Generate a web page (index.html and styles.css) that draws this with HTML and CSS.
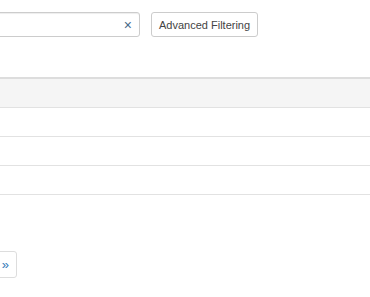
FILE: index.html
```html
<!DOCTYPE html>
<html lang="en">
<head>
    <meta charset="UTF-8">
    <meta name="viewport" content="width=device-width, initial-scale=1.0">
    <title>Grid</title>
    <link rel="stylesheet" href="styles.css">
</head>
<body>
    <div class="page">
        <div class="toolbar">
            <div class="search">
                <input type="text" class="search-input">
                <span class="clear">&times;</span>
            </div>
            <button class="btn">Advanced Filtering</button>
        </div>

        <table class="grid">
            <thead>
                <tr><th></th></tr>
            </thead>
            <tbody>
                <tr><td></td></tr>
                <tr><td></td></tr>
                <tr><td></td></tr>
            </tbody>
        </table>

        <div class="pager">
            <a class="page-link">&raquo;</a>
        </div>
    </div>
</body>
</html>
```

FILE: styles.css
```css
body {
    margin: 0;
    font-family: "Liberation Sans", Arial, sans-serif;
    font-size: 12px;
    color: #333;
    background: #fff;
    overflow: hidden;
}

.page {
    margin-left: -200px;
    width: 570px;
    overflow: hidden;
}

.toolbar {
    display: flex;
    align-items: center;
    padding-top: 12px;
    height: 25px;
}

.search {
    display: flex;
    align-items: center;
    width: 340px;
    height: 25px;
    box-sizing: border-box;
    border: 1px solid #ccc;
    border-radius: 3px;
    box-shadow: inset 0 1px 1px rgba(0, 0, 0, 0.075);
}

.search-input {
    flex: 1;
    min-width: 0;
    border: none;
    outline: none;
    background: transparent;
}

.clear {
    color: #4a6a8a;
    font-size: 14px;
    margin-right: 7px;
    line-height: 1;
}

.btn {
    margin-left: 11px;
    height: 25px;
    padding: 0 7px;
    font-family: inherit;
    font-size: 11px;
    color: #444;
    background: #fff;
    border: 1px solid #ccc;
    border-radius: 3px;
}

.grid {
    margin-top: 40px;
    width: 100%;
    border-collapse: collapse;
}

.grid th {
    height: 28px;
    background: #f5f5f5;
    border-top: 2px solid #ddd;
    border-bottom: 1px solid #e2e2e2;
    padding: 0;
}

.grid td {
    height: 28px;
    border-bottom: 1px solid #e2e2e2;
    padding: 0;
}

.pager {
    margin-top: 56px;
    margin-left: 150px;
    display: flex;
}

.page-link {
    display: block;
    width: 67px;
    height: 27px;
    box-sizing: border-box;
    border: 1px solid #ddd;
    border-radius: 0 3px 3px 0;
    color: #337ab7;
    text-align: right;
    padding-right: 7px;
    line-height: 25px;
    font-size: 13px;
}
```
